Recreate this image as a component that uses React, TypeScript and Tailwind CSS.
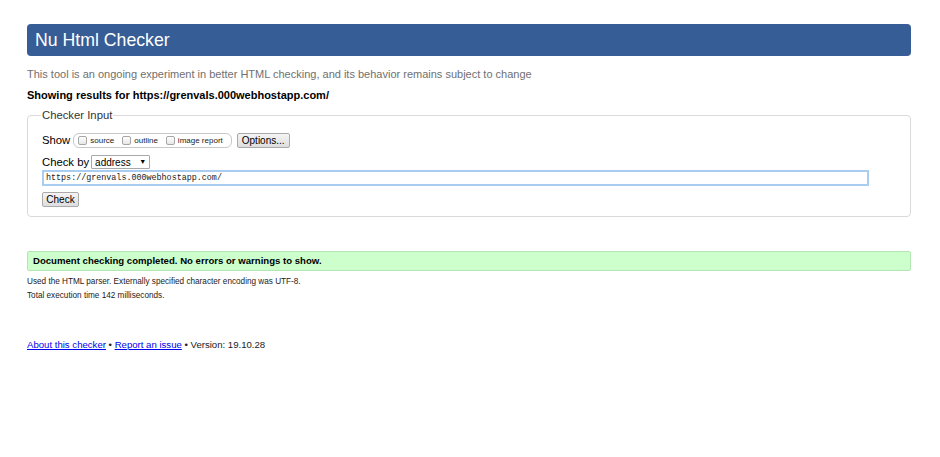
import React from "react";

const Box = ({ label }: { label: string }) => (
  <span className="flex items-center gap-[3px] mr-[8px]">
    <span className="inline-block w-[9px] h-[9px] border border-[#a6a6a6] rounded-[2px] bg-gradient-to-b from-white to-[#e6e6e6]" />
    <span className="text-[8px] text-[#222]">{label}</span>
  </span>
);

const App = () => {
  return (
    <div className="w-[940px] h-[457px] bg-white font-['Liberation_Sans',Arial,sans-serif] text-black">
      <div className="ml-[27px] w-[884px] pt-[24px]">
        <h1 className="h-[32px] bg-[#365d95] rounded-[4px] text-white text-[17.7px] leading-[32px] pl-[8px]">
          Nu Html Checker
        </h1>
        <p className="mt-[11px] text-[11px] leading-[14px] text-[#707070]">
          This tool is an ongoing experiment in better HTML checking, and its behavior remains subject to change
        </p>
        <p className="mt-[7px] text-[11px] leading-[14px] font-bold">
          Showing results for https://grenvals.000webhostapp.com/
        </p>

        <fieldset className="mt-[5px] border border-[#d9d9d9] rounded-[4px] px-[14px] pb-[6px]">
          <legend className="text-[11.3px] text-[#333] px-[1px] ml-[-1px]">Checker Input</legend>
          <div className="flex items-center mt-[8px] h-[18px]">
            <span className="text-[11.3px] mr-[3px]">Show</span>
            <span className="flex items-center h-[15px] pl-[4px] border border-[#c8c8c8] rounded-[6px]">
              <Box label="source" />
              <Box label="outline" />
              <Box label="image report" />
            </span>
            <button className="ml-[5px] h-[15px] px-[4px] text-[10px] leading-[13px] border border-[#a9a9a9] rounded-[2px] bg-gradient-to-b from-[#f4f4f4] to-[#dedede]">
              Options...
            </button>
          </div>
          <div className="flex items-center mt-[5px] h-[15px]">
            <span className="text-[11.3px] mr-[2px]">Check by</span>
            <span className="flex items-center justify-between w-[59px] h-[14px] border border-[#a9a9a9] rounded-[1px] px-[3px] text-[10px]">
              address
              <span className="text-[7px]">▼</span>
            </span>
          </div>
          <div className="w-[827px] h-[16px] border-2 border-[#a8cdf1] flex items-center px-[2px] font-['Liberation_Mono',monospace] text-[8.4px] text-[#222]">
            https://grenvals.000webhostapp.com/
          </div>
          <button className="mt-[3px] h-[15px] w-[37px] text-[10px] leading-[13px] border border-[#a9a9a9] rounded-[2px] bg-gradient-to-b from-[#f4f4f4] to-[#dedede]">
            Check
          </button>
        </fieldset>

        <div className="mt-[34px] h-[20px] bg-[#ccffcc] border border-[#b3e6b3] rounded-[2px] flex items-center pl-[5px] text-[9.6px] font-bold">
          Document checking completed. No errors or warnings to show.
        </div>
        <p className="mt-[4px] text-[8.2px] leading-[14px] text-[#222]">
          Used the HTML parser. Externally specified character encoding was UTF-8.
        </p>
        <p className="text-[8.2px] leading-[14px] text-[#222]">Total execution time 142 milliseconds.</p>

        <p className="mt-[35px] text-[9.6px] leading-[14px] text-[#222]">
          <a href="#" className="text-[#0000ee] underline">About this checker</a>
          {" • "}
          <a href="#" className="text-[#0000ee] underline">Report an issue</a>
          {" • Version: 19.10.28"}
        </p>
      </div>
    </div>
  );
};

export default App;
